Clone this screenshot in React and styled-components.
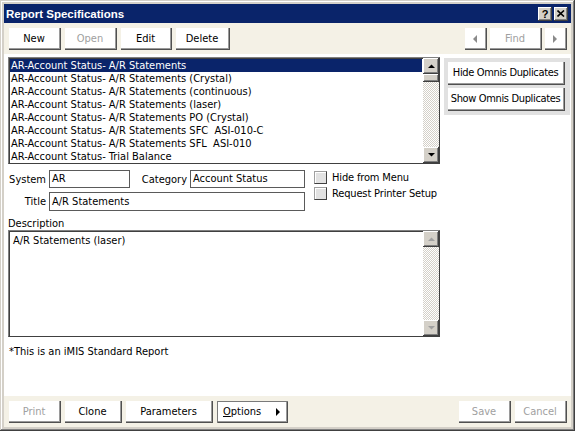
import React from 'react'
import styled, { createGlobalStyle, css } from 'styled-components'

const GlobalStyle = createGlobalStyle`
  html, body { margin: 0; padding: 0; background: #fff; }
  body { font-family: "DejaVu Sans Condensed", "Liberation Sans", sans-serif; font-size: 11px; color: #000; }
`

const FONT = '"DejaVu Sans Condensed", "Liberation Sans", sans-serif'

const raised = css`
  box-shadow: inset -1px -1px #404040, inset 1px 1px #fff, inset -2px -2px #808080;
`

const dither = css`
  background: repeating-conic-gradient(#d4d0c8 0 25%, #fff 0 50%) 0 0 / 2px 2px;
`

const Window = styled.div`
  width: 575px;
  height: 431px;
  box-sizing: border-box;
  padding: 4px;
  background: #d4d0c8;
  box-shadow: inset -1px -1px #404040, inset 1px 1px #d4d0c8, inset -2px -2px #808080, inset 2px 2px #fff;
  display: flex;
  flex-direction: column;
  font-family: ${FONT};
`

const TitleBar = styled.div`
  height: 19px;
  background: #0a246a;
  display: flex;
  align-items: center;
  padding: 0 3px 0 2px;
`

const Title = styled.div`
  flex: 1;
  color: #fff;
  font-weight: bold;
  font-family: "Liberation Sans", sans-serif;
  font-size: 11.5px;
`

const CaptionButton = styled.div`
  width: 14px;
  height: 13px;
  margin-left: 2px;
  background: #d4d0c8;
  ${raised};
  display: flex;
  align-items: center;
  justify-content: center;
  padding-bottom: 1px;
`

const Toolbar = styled.div`
  height: 31px;
  background: #f4f1e6;
  display: flex;
  align-items: flex-start;
  box-sizing: border-box;
  padding: 5px 4px 0 5px;
  gap: 4px;
`

const Spacer = styled.div`
  flex: 1;
`

const Button = styled.div`
  width: ${p => p.$w || 52}px;
  height: 22px;
  box-sizing: border-box;
  background: #fff;
  box-shadow: inset -1px -1px #505050, inset -2px -2px #9a9a9a;
  display: flex;
  align-items: center;
  justify-content: center;
  padding: 1px 2px 2px 0;
  color: ${p => (p.$disabled ? '#a0a0a0' : '#000')};
  font-size: 11px;
  ${p => p.$outlined && css`
    box-shadow: inset 1px 1px #7a7a7a, inset -1px -1px #505050, inset -2px -2px #9a9a9a;
    justify-content: space-between;
    padding: 1px 8px 2px 6px;
  `}
`

const NavGroup = styled.div`
  display: flex;
  gap: 3px;
`

const Content = styled.div`
  flex: 1;
  background: #fff;
  padding: 3px 1px 0 4px;
  display: flex;
  flex-direction: column;
`

const TopRow = styled.div`
  display: flex;
  align-items: flex-start;
  gap: 4px;
`

const Box = styled.div`
  position: relative;
  width: 432px;
  height: ${p => p.$h}px;
  box-sizing: border-box;
  border: 1px solid #404040;
  border-top-color: #808080;
  border-left-color: #808080;
  box-shadow: inset 1px 1px #404040;
  padding: 1px 17px 0 1px;
  overflow: hidden;
`

const Row = styled.div`
  height: 13px;
  line-height: 14px;
  padding-left: 1px;
  white-space: pre;
  background: ${p => (p.$selected ? '#0a246a' : 'transparent')};
  color: ${p => (p.$selected ? '#fff' : '#000')};
`

const ScrollBar = styled.div`
  position: absolute;
  top: 0;
  right: 0;
  bottom: 0;
  width: 16px;
  ${dither};
  display: flex;
  flex-direction: column;
`

const ScrollButton = styled.div`
  height: 16px;
  background: #d4d0c8;
  ${raised};
  display: flex;
  align-items: center;
  justify-content: center;
`

const Thumb = styled.div`
  height: 8px;
  background: #d4d0c8;
  ${raised};
`

const Fill = styled.div`
  flex: 1;
`

const SidePanel = styled.div`
  width: 126px;
  margin-top: 1px;
  background: #e1e1e1;
  padding: 4px 0 4px 4px;
  box-sizing: border-box;
  display: flex;
  flex-direction: column;
  gap: 3px;
`

const PanelButton = styled.div`
  width: 117px;
  height: 23px;
  box-sizing: border-box;
  background: #fff;
  box-shadow: inset -1px -1px #505050, inset -2px -2px #9a9a9a;
  display: flex;
  align-items: center;
  justify-content: center;
  padding: 0 2px 2px 0;
  white-space: nowrap;
  letter-spacing: -0.35px;
`

const FormRow = styled.div`
  display: flex;
  align-items: flex-start;
  margin-top: 6px;
`

const Fields = styled.div`
  display: grid;
  grid-template-columns: 38px 81px 54px 115px;
  column-gap: 3px;
  row-gap: 4px;
  align-items: center;
`

const Label = styled.div`
  text-align: right;
  white-space: nowrap;
`

const Input = styled.div`
  height: ${p => p.$h || 18}px;
  box-sizing: border-box;
  border: 1px solid #5a5a5a;
  padding: 0 2px;
  line-height: ${p => (p.$h || 18) - 2}px;
  grid-column: ${p => p.$span || 'auto'};
  white-space: nowrap;
`

const Checks = styled.div`
  margin-left: 9px;
  margin-top: 1px;
  display: flex;
  flex-direction: column;
  gap: 3px;
`

const CheckItem = styled.div`
  display: flex;
  align-items: center;
  gap: 5px;
  height: 13px;
  letter-spacing: -0.15px;
`

const CheckBox = styled.div`
  width: 13px;
  height: 13px;
  box-sizing: border-box;
  background: #e2e2e2;
  border: 1px solid #404040;
  border-top-color: #a0a0a0;
  border-left-color: #a0a0a0;
  box-shadow: inset 1px 1px #fff;
`

const DescLabel = styled.div`
  margin-top: 6px;
  height: 13px;
  line-height: 13px;
`

const DescText = styled.div`
  padding: 2px 0 0 3px;
`

const Note = styled.div`
  margin-top: 8px;
  padding-left: 1px;
`

const Arrow = ({ dir, color = '#000' }) => {
  const pts = {
    up: '0,4 7,4 3.5,0.5',
    down: '0,0 7,0 3.5,3.5',
    left: '4,0 4,8 0,4',
    right: '0,0 0,8 4,4',
  }[dir]
  const vertical = dir === 'up' || dir === 'down'
  return (
    <svg width={vertical ? 7 : 4} height={vertical ? 4 : 8} viewBox={vertical ? '0 0 7 4' : '0 0 4 8'}>
      <polygon points={pts} fill={color} />
    </svg>
  )
}

const items = [
  'AR-Account Status- A/R Statements',
  'AR-Account Status- A/R Statements (Crystal)',
  'AR-Account Status- A/R Statements (continuous)',
  'AR-Account Status- A/R Statements (laser)',
  'AR-Account Status- A/R Statements PO (Crystal)',
  'AR-Account Status- A/R Statements SFC  ASI-010-C',
  'AR-Account Status- A/R Statements SFL  ASI-010',
  'AR-Account Status- Trial Balance',
]

export default function App() {
  return (
    <>
      <GlobalStyle />
      <Window>
        <TitleBar>
          <Title>Report Specifications</Title>
          <CaptionButton>
            <svg width="8" height="9" viewBox="0 0 8 9">
              <text x="4" y="8.5" textAnchor="middle" fontSize="11" fontWeight="bold" fontFamily="Liberation Sans, sans-serif">?</text>
            </svg>
          </CaptionButton>
          <CaptionButton>
            <svg width="8" height="7" viewBox="0 0 8 7">
              <path d="M0.5 0.5 L7 6.5 M7 0.5 L0.5 6.5" stroke="#000" strokeWidth="1.6" />
            </svg>
          </CaptionButton>
        </TitleBar>

        <Toolbar>
          <Button>New</Button>
          <Button $disabled>Open</Button>
          <Button $w={51}>Edit</Button>
          <Button $w={54}>Delete</Button>
          <Spacer />
          <NavGroup>
            <Button $w={22}><Arrow dir="left" color="#8a8a8a" /></Button>
            <Button $disabled>Find</Button>
            <Button $w={22}><Arrow dir="right" color="#8a8a8a" /></Button>
          </NavGroup>
        </Toolbar>

        <Content>
          <TopRow>
            <Box $h={107}>
              {items.map((t, i) => (
                <Row key={t} $selected={i === 0}>{t}</Row>
              ))}
              <ScrollBar>
                <ScrollButton><Arrow dir="up" /></ScrollButton>
                <Thumb />
                <Fill />
                <ScrollButton><Arrow dir="down" /></ScrollButton>
              </ScrollBar>
            </Box>
            <SidePanel>
              <PanelButton>Hide Omnis Duplicates</PanelButton>
              <PanelButton>Show Omnis Duplicates</PanelButton>
            </SidePanel>
          </TopRow>

          <FormRow>
            <Fields>
              <Label>System</Label>
              <Input>AR</Input>
              <Label>Category</Label>
              <Input>Account Status</Input>
              <Label>Title</Label>
              <Input $h={19} $span="2 / 5">A/R Statements</Input>
            </Fields>
            <Checks>
              <CheckItem><CheckBox />Hide from Menu</CheckItem>
              <CheckItem><CheckBox />Request Printer Setup</CheckItem>
            </Checks>
          </FormRow>

          <DescLabel>Description</DescLabel>
          <Box $h={107}>
            <DescText>A/R Statements (laser)</DescText>
            <ScrollBar>
              <ScrollButton><Arrow dir="up" color="#a0a0a0" /></ScrollButton>
              <Fill />
              <ScrollButton><Arrow dir="down" color="#a0a0a0" /></ScrollButton>
            </ScrollBar>
          </Box>
          <Note>*This is an iMIS Standard Report</Note>
        </Content>

        <Toolbar>
          <Button $disabled>Print</Button>
          <Button $w={57}>Clone</Button>
          <Button $w={87}>Parameters</Button>
          <Button $w={71} $outlined>
            <span><u>O</u>ptions</span>
            <Arrow dir="right" />
          </Button>
          <Spacer />
          <Button $disabled>Save</Button>
          <Button $disabled>Cancel</Button>
        </Toolbar>
      </Window>
    </>
  )
}
